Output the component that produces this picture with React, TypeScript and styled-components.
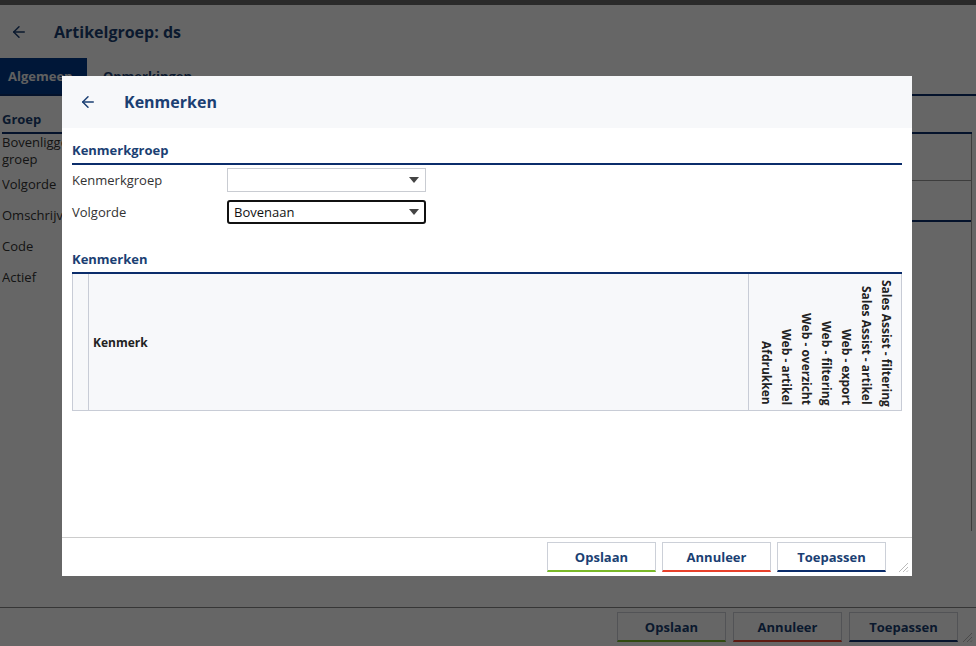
import { ArrowLeft } from "lucide-react";
import styled, { createGlobalStyle } from "styled-components";

const GlobalStyle = createGlobalStyle`
  html, body {
    margin: 0;
    padding: 0;
    font-family: "Open Sans", "Liberation Sans", sans-serif;
    font-size: 13px;
    color: #333;
  }
  * { box-sizing: border-box; }
`;

const navy = "#1b3f73";
const rule = "#0b2d6b";

const Page = styled.div`
  position: relative;
  width: 976px;
  height: 646px;
  overflow: hidden;
  background: #fff;
  display: flex;
  flex-direction: column;
`;
const TopStrip = styled.div`
  height: 5px;
  background: #6a6a6a;
`;
const PageHeader = styled.div`
  height: 53px;
  display: flex;
  align-items: center;
  gap: 26px;
  padding: 0 0 0 10px;
  color: ${navy};
`;
const PageTitle = styled.h1`
  margin: 0;
  font-size: 16px;
  font-weight: 700;
  color: ${navy};
`;
const Tabs = styled.div`
  height: 38px;
  display: flex;
  border-bottom: 2px solid ${rule};
`;
const Tab = styled.div<{ $active?: boolean }>`
  width: ${(p) => (p.$active ? "87px" : "auto")};
  padding: 0 ${(p) => (p.$active ? "8px" : "16px")};
  display: flex;
  align-items: center;
  font-weight: 700;
  font-size: 13px;
  background: ${(p) => (p.$active ? "#003a8c" : "transparent")};
  color: ${(p) => (p.$active ? "#f0f0f0" : navy)};
  white-space: nowrap;
  overflow: hidden;
`;
const Body = styled.div`
  flex: 1;
  display: flex;
  padding: 14px 4px 0 2px;
`;
const LabelCol = styled.div`
  width: 100%;
  display: flex;
  flex-direction: column;
`;
const GroupHeading = styled.div`
  font-weight: 700;
  color: ${navy};
  font-size: 13px;
  padding-bottom: 4px;
  border-bottom: 2px solid ${rule};
`;
const FieldRows = styled.div`
  display: grid;
  grid-template-columns: 60px 1fr;
  grid-template-rows: 40px 31px 31px 31px 31px;
  border-right: 1px solid #999;
  height: 397px;
  align-content: start;
`;
const FieldLabel = styled.div<{ $first?: boolean }>`
  grid-column: 1;
  line-height: 17px;
  padding-top: ${(p) => (p.$first ? 0 : 2)}px;
  color: #333;
  white-space: nowrap;
  overflow: hidden;
`;
const ValueStack = styled.div`
  grid-column: 2;
  grid-row: 1 / -1;
  display: flex;
  flex-direction: column;
`;
const ValueBlock = styled.div<{ $h: number; $line: string }>`
  height: ${(p) => p.$h}px;
  border-bottom: ${(p) => p.$line};
`;
const Footer = styled.div`
  height: 39px;
  border-top: 1px solid #888;
  display: flex;
  justify-content: flex-end;
  align-items: center;
  gap: 7px;
  padding-right: 18px;
  position: relative;
`;
const Button = styled.button<{ $accent: string }>`
  width: 109px;
  height: 30px;
  background: #fff;
  border: 1px solid #ccd0d8;
  border-bottom: 2px solid ${(p) => p.$accent};
  font-family: inherit;
  font-size: 13px;
  font-weight: 700;
  color: ${navy};
  cursor: pointer;
`;
const Grip = styled.svg`
  position: absolute;
  right: 3px;
  bottom: 3px;
`;

const Overlay = styled.div`
  position: absolute;
  inset: 0;
  background: rgba(0, 0, 0, 0.6);
`;
const Modal = styled.div`
  position: absolute;
  left: 62px;
  top: 76px;
  width: 850px;
  height: 500px;
  background: #fff;
  display: flex;
  flex-direction: column;
`;
const ModalHeader = styled.div`
  height: 52px;
  background: #f7f8fa;
  display: flex;
  align-items: center;
  gap: 27px;
  padding-left: 17px;
  color: ${navy};
`;
const ModalTitle = styled.h2`
  margin: 0;
  font-size: 16px;
  font-weight: 700;
  color: ${navy};
`;
const ModalBody = styled.div`
  flex: 1;
  padding: 13px 10px 0;
  display: flex;
  flex-direction: column;
`;
const Section = styled.div<{ $gap?: number }>`
  margin-bottom: ${(p) => p.$gap ?? 0}px;
`;
const SectionTitle = styled.div`
  font-weight: 700;
  font-size: 13px;
  color: ${navy};
  padding-bottom: 4px;
  border-bottom: 2px solid ${rule};
`;
const FormRows = styled.div`
  display: flex;
  flex-direction: column;
  gap: 8px;
  padding-top: 3px;
`;
const FormRow = styled.div`
  display: grid;
  grid-template-columns: 155px 199px;
  align-items: center;
`;
const Label = styled.div`
  color: #333;
  font-size: 13px;
`;
const Select = styled.div<{ $focus?: boolean }>`
  height: 24px;
  border: ${(p) => (p.$focus ? "2px solid #111" : "1px solid #c9ccd2")};
  border-radius: ${(p) => (p.$focus ? "3px" : "0")};
  display: flex;
  align-items: center;
  padding: 0 ${(p) => (p.$focus ? "5px" : "6px")};
  font-size: 13px;
  color: #111;
  &::after {
    content: "";
    margin-left: auto;
    border-left: 5px solid transparent;
    border-right: 5px solid transparent;
    border-top: 6px solid #444;
  }
`;
const Table = styled.div`
  display: grid;
  grid-template-columns: 16px 1fr 152px;
  grid-template-rows: 136px;
  background: #f7f8fa;
  border: 1px solid #c8ccd6;
  border-top: none;
`;
const Cell = styled.div`
  min-width: 0;
  min-height: 0;
  overflow: hidden;
  border-right: 1px solid #c8ccd6;
  display: flex;
  align-items: center;
  padding-left: 4px;
  font-weight: 700;
  font-size: 12px;
  color: #222;
`;
const HeadCell = styled.div`
  min-width: 0;
  min-height: 0;
  overflow: hidden;
  display: flex;
  justify-content: flex-end;
  align-items: stretch;
  padding-right: 5px;
`;
const VerticalHead = styled.div`
  writing-mode: vertical-rl;
  text-align: end;
  font-weight: 700;
  font-size: 12px;
  line-height: 20px;
  color: #222;
  height: 136px;
  padding: 6px 0 5px;
  white-space: nowrap;
`;
const ModalFooter = styled.div`
  margin-top: auto;
  height: 39px;
  border-top: 1px solid #ccc;
  display: flex;
  justify-content: flex-end;
  align-items: center;
  gap: 6px;
  padding-right: 26px;
  position: relative;
`;

const columns = [
  "Sales Assist - filtering",
  "Sales Assist - artikel",
  "Web - export",
  "Web - filtering",
  "Web - overzicht",
  "Web - artikel",
  "Afdrukken",
];

function ResizeGrip({ color }: { color: string }) {
  return (
    <Grip width="11" height="11" viewBox="0 0 11 11">
      <path d="M1 10 L10 1 M5 10 L10 5 M8.5 10 L10 8.5" stroke={color} strokeWidth="1" />
    </Grip>
  );
}

function Buttons() {
  return (
    <>
      <Button $accent="#7ab929">Opslaan</Button>
      <Button $accent="#e8412c">Annuleer</Button>
      <Button $accent={rule}>Toepassen</Button>
    </>
  );
}

export default function App() {
  return (
    <Page>
      <GlobalStyle />
      <TopStrip />
      <PageHeader>
        <ArrowLeft size={18} strokeWidth={2} />
        <PageTitle>Artikelgroep: ds</PageTitle>
      </PageHeader>
      <Tabs>
        <Tab $active>Algemeen</Tab>
        <Tab>Opmerkingen</Tab>
      </Tabs>
      <Body>
        <LabelCol>
          <GroupHeading>Groep</GroupHeading>
          <FieldRows>
            <FieldLabel $first>
              Bovenliggende
              <br />
              groep
            </FieldLabel>
            <FieldLabel>Volgorde</FieldLabel>
            <FieldLabel>Omschrijving</FieldLabel>
            <FieldLabel>Code</FieldLabel>
            <FieldLabel>Actief</FieldLabel>
            <ValueStack>
              <ValueBlock $h={47} $line="1px solid #999" />
              <ValueBlock $h={41} $line={`2px solid ${rule}`} />
            </ValueStack>
          </FieldRows>
        </LabelCol>
      </Body>
      <Footer>
        <Buttons />
        <ResizeGrip color="#bbb" />
      </Footer>

      <Overlay />
      <Modal>
        <ModalHeader>
          <ArrowLeft size={18} strokeWidth={2} />
          <ModalTitle>Kenmerken</ModalTitle>
        </ModalHeader>
        <ModalBody>
          <Section $gap={26}>
            <SectionTitle>Kenmerkgroep</SectionTitle>
            <FormRows>
              <FormRow>
                <Label>Kenmerkgroep</Label>
                <Select />
              </FormRow>
              <FormRow>
                <Label>Volgorde</Label>
                <Select $focus>Bovenaan</Select>
              </FormRow>
            </FormRows>
          </Section>
          <Section>
            <SectionTitle>Kenmerken</SectionTitle>
            <Table>
              <Cell />
              <Cell>Kenmerk</Cell>
              <HeadCell>
                <VerticalHead>
                  {columns.map((c) => (
                    <div key={c}>{c}</div>
                  ))}
                </VerticalHead>
              </HeadCell>
            </Table>
          </Section>
        </ModalBody>
        <ModalFooter>
          <Buttons />
          <ResizeGrip color="#bbb" />
        </ModalFooter>
      </Modal>
    </Page>
  );
}
